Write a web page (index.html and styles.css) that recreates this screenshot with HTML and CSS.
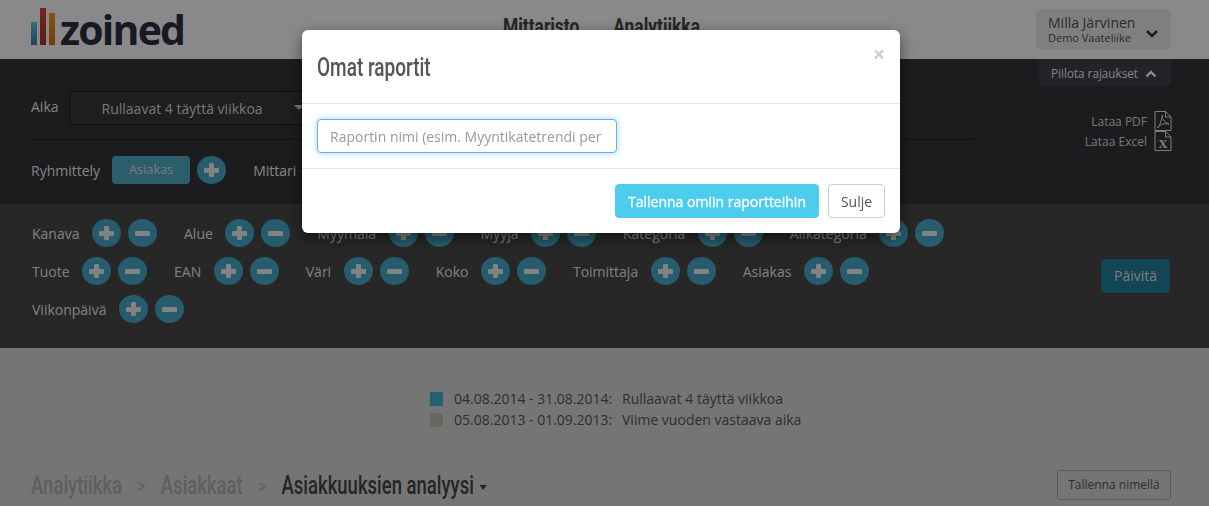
FILE: index.html

```html
<!DOCTYPE html>
<html lang="fi">
<head>
  <meta charset="UTF-8">
  <title>Zoined - Analytiikka</title>
  <link rel="stylesheet" href="styles.css">
</head>
<body>
  <div class="page">
    <header class="topbar">
      <div class="logo">
        <span class="logo-bar bar-blue"></span>
        <span class="logo-bar bar-red"></span>
        <span class="logo-bar bar-orange"></span>
        <span class="logo-text">zoined</span>
      </div>
      <nav class="mainnav">
        <a>Mittaristo</a>
        <a>Analytiikka</a>
      </nav>
      <div class="user">
        <div>
          <div class="user-name">Milla Järvinen</div>
          <div class="user-org">Demo Vaateliike</div>
        </div>
        <svg class="chev" width="14" height="9" viewBox="0 0 14 9"><path d="M2 2l5 5 5-5" fill="none" stroke="#3a3a3a" stroke-width="2.6"/></svg>
      </div>
    </header>

    <section class="head">
      <div class="head-left">
        <div class="time-row">
          <span class="lbl">Aika</span>
          <div class="select">Rullaavat 4 täyttä viikkoa<span class="caret"></span></div>
        </div>
        <div class="group-row">
          <span class="lbl">Ryhmittely</span>
          <span class="chip">Asiakas</span>
          <span class="circle plus"></span>
          <span class="lbl lbl-mittari">Mittari</span>
        </div>
      </div>
      <div class="head-right">
        <div class="hide-tab">Piilota rajaukset
          <svg width="12" height="8" viewBox="0 0 12 8"><path d="M1.5 6.5L6 2l4.5 4.5" fill="none" stroke="#fff" stroke-width="2.4"/></svg>
        </div>
        <div class="downloads">
          <div class="dl">Lataa PDF
            <svg width="18" height="20" viewBox="0 0 18 20"><path class="file" d="M1 .5h10.5l5.5 5.5v13.5H1zM11.5 .5V6H17"/><path class="file" d="M8.500 4c-1 3 1 7 6.500 9-4-1-9 0-11.500 4 2-2 4-7 5-13z"/></svg>
          </div>
          <div class="dl">Lataa Excel
            <svg width="18" height="20" viewBox="0 0 18 20"><path class="file" d="M1 .5h10.500l5.500 5.500v13.500H1zM11.500 .5V6H17"/><text x="9" y="17" class="file-x">X</text></svg>
          </div>
        </div>
      </div>
    </section>

    <section class="filters">
      <div class="filter-rows">
        <div class="filter-row">
          <div class="filter"><span>Kanava</span><i class="circle plus"></i><i class="circle minus"></i></div>
          <div class="filter"><span>Alue</span><i class="circle plus"></i><i class="circle minus"></i></div>
          <div class="filter"><span>Myymälä</span><i class="circle plus"></i><i class="circle minus"></i></div>
          <div class="filter"><span>Myyjä</span><i class="circle plus"></i><i class="circle minus"></i></div>
          <div class="filter"><span>Kategoria</span><i class="circle plus"></i><i class="circle minus"></i></div>
          <div class="filter"><span>Alikategoria</span><i class="circle plus"></i><i class="circle minus"></i></div>
        </div>
        <div class="filter-row">
          <div class="filter"><span>Tuote</span><i class="circle plus"></i><i class="circle minus"></i></div>
          <div class="filter"><span>EAN</span><i class="circle plus"></i><i class="circle minus"></i></div>
          <div class="filter"><span>Väri</span><i class="circle plus"></i><i class="circle minus"></i></div>
          <div class="filter"><span>Koko</span><i class="circle plus"></i><i class="circle minus"></i></div>
          <div class="filter"><span>Toimittaja</span><i class="circle plus"></i><i class="circle minus"></i></div>
          <div class="filter"><span>Asiakas</span><i class="circle plus"></i><i class="circle minus"></i></div>
        </div>
        <div class="filter-row">
          <div class="filter"><span>Viikonpäivä</span><i class="circle plus"></i><i class="circle minus"></i></div>
        </div>
      </div>
      <button class="update">Päivitä</button>
    </section>

    <section class="legend">
      <span class="swatch sw-blue"></span><span>04.08.2014 - 31.08.2014:</span><span>Rullaavat 4 täyttä viikkoa</span>
      <span class="swatch sw-gray"></span><span>05.08.2013 - 01.09.2013:</span><span>Viime vuoden vastaava aika</span>
    </section>

    <section class="crumbrow">
      <div class="crumbs">
        <span>Analytiikka</span><b>&gt;</b><span>Asiakkaat</span><b>&gt;</b><span class="current">Asiakkuuksien analyysi</span><i class="crumb-caret"></i>
      </div>
      <button class="save-as">Tallenna nimellä</button>
    </section>
  </div>

  <div class="backdrop"></div>

  <div class="modal">
    <div class="modal-header">
      <h4>Omat raportit</h4>
      <span class="close">×</span>
    </div>
    <div class="modal-body">
      <input class="report-name" placeholder="Raportin nimi (esim. Myyntikatetrendi per">
    </div>
    <div class="modal-footer">
      <button class="btn-primary">Tallenna omiin raportteihin</button>
      <button class="btn-close">Sulje</button>
    </div>
  </div>
</body>
</html>
```

FILE: styles.css

```css
* { box-sizing: border-box; }
html, body { margin: 0; height: 506px; overflow: hidden; }
body {
  font-family: "Open Sans", sans-serif;
  font-size: 14px;
  color: #555;
  background: #d5d5d5;
}
.page { height: 506px; overflow: hidden; }

/* top bar */
.topbar {
  height: 59px;
  background: #fafafa;
  display: flex;
  align-items: flex-start;
  padding: 0 38px 0 31px;
}
.logo { width: 441px; height: 59px; display: flex; align-items: flex-end; padding-bottom: 14px; }
.logo-bar { width: 6px; margin-right: 3px; }
.bar-blue { height: 23px; background: linear-gradient(#52c6e6, #3f7fa8); }
.bar-red { height: 37px; background: linear-gradient(#d9443a, #a8302e); }
.bar-orange { height: 32px; background: linear-gradient(#ee9a1c, #c9731a); }
.logo-text {
  font-size: 41px;
  font-weight: 700;
  line-height: 41px;
  letter-spacing: -1.8px;
  margin-left: 2px;
  margin-bottom: -5px;
  color: #2b3140;
}
/* headings are a condensed face in the original, none is installed here */
.mainnav {
  display: flex;
  gap: 43px;
  width: 564px;
  padding-top: 14px;
  padding-left: 31px;
  transform: scaleX(.79);
  transform-origin: 31px 0;
}
.mainnav a {
  font-family: Roboto, sans-serif;
  font-size: 22px;
  font-weight: 700;
  color: #444;
}
.user {
  width: 135px;
  height: 40px;
  margin-top: 9px;
  padding: 3px 12px;
  background: #e8e8e8;
  border-radius: 4px;
  display: flex;
  justify-content: space-between;
  align-items: center;
  color: #4e4e4e;
}
.user-name { font-size: 14px; line-height: 17px; }
.user-org { font-size: 11px; line-height: 13px; }
.chev { margin-top: 9px; }

/* dark head band */
.head {
  height: 145px;
  background: #313336;
  display: flex;
  padding-left: 31px;
  padding-right: 38px;
  color: #fafafa;
}
.head-left { width: 944px; padding-top: 32px; }
.head-right { flex: 1; display: flex; flex-direction: column; align-items: flex-end; }
.time-row { display: flex; align-items: center; height: 49px; padding-bottom: 15px; border-bottom: 1px solid #1f2022; }
.lbl { color: #eee; font-size: 14px; }
.time-row .lbl { margin-top: -2px; }
.select {
  position: relative;
  width: 250px;
  height: 34px;
  margin-left: 10px;
  padding-left: 32px;
  line-height: 34px;
  background: #373737;
  border: 1px solid #1a1a1a;
  border-radius: 4px;
  color: #d9d9d9;
}
.caret {
  position: absolute;
  right: 14px;
  top: 13px;
  border: 5px solid transparent;
  border-top-color: #ddd;
}
.group-row { display: flex; align-items: center; margin-top: 15px; height: 30px; }
.chip {
  width: 78px;
  height: 28px;
  margin-left: 12px;
  margin-right: 7px;
  line-height: 26px;
  text-align: center;
  font-size: 12.7px;
  background: #4fa9c2;
  border-radius: 4px;
  color: #e4e4e4;
}
.lbl-mittari { margin-left: 27px; }
.hide-tab {
  width: 132px;
  height: 27px;
  padding-left: 12px;
  font-size: 11.7px;
  line-height: 29px;
  background: #3f4145;
  border-radius: 0 0 5px 5px;
  color: #eee;
}
.hide-tab svg { margin-left: 4px; }
.downloads { margin-top: 25px; }
.dl {
  display: flex;
  justify-content: flex-end;
  align-items: center;
  gap: 7px;
  height: 20px;
  font-size: 12px;
  color: #ddd;
}
.dl svg { margin-right: -1px; }
.file { fill: none; stroke: #e6e6e6; stroke-width: 1; }
.file-x { font-family: "Liberation Serif", serif; font-weight: 700; font-size: 13px; text-anchor: middle; fill: #e6e6e6; }

/* filters */
.filters {
  height: 144px;
  background: #474747;
  display: flex;
  justify-content: space-between;
  padding: 10px 39px 0 32px;
}
.filter-row { display: flex; height: 38px; gap: 27px; align-items: center; }
.filter { display: flex; align-items: center; color: #e8e8e8; }
.filter span { margin-right: 12.5px; }
.filter .circle + .circle { margin-left: 7px; }
.circle {
  position: relative;
  display: inline-block;
  flex: none;
  width: 29px;
  height: 28px;
  border-radius: 50%;
  background: #45a8c8;
}
.plus::before, .plus::after, .minus::before {
  content: "";
  position: absolute;
  background: #ededed;
  border-radius: 1px;
}
.plus::before, .minus::before { left: 7px; right: 7px; top: 11.5px; height: 5px; }
.plus::after { top: 7px; bottom: 7px; left: 12px; width: 5px; }
.update {
  width: 69px;
  height: 34px;
  margin-top: 45px;
  padding-bottom: 3px;
  border: 0;
  border-radius: 4px;
  background: #217f9b;
  color: #e4e4e4;
  font: 14px "Open Sans", sans-serif;
}

/* legend */
.legend {
  display: grid;
  grid-template-columns: 24px 168px auto;
  grid-auto-rows: 21px;
  align-items: center;
  margin: 40px 0 0 430px;
  width: 600px;
}
.swatch { width: 13px; height: 14px; }
.sw-blue { background: #45aed0; }
.sw-gray { background: #bebeaf; }

/* breadcrumbs */
.crumbrow {
  display: flex;
  justify-content: space-between;
  align-items: center;
  margin-top: 39px;
  padding: 0 38px 0 31px;
}
.crumbs {
  display: flex;
  align-items: center;
  margin-top: 2px;
  font-family: Roboto, sans-serif;
  font-size: 25px;
  font-weight: 500;
  color: #adadad;
  transform: scaleX(.74);
  transform-origin: 0 0;
}
.crumbs b { font-size: 20px; font-weight: 400; margin: 0 21px; }
.crumbs .current { color: #454545; }
.crumb-caret {
  margin: 4px 0 0 7px;
  border: 5px solid transparent;
  border-top-color: #454545;
  border-bottom: 0;
}
.save-as {
  width: 114px;
  height: 30px;
  background: #d5d5d5;
  border: 1px solid #a3a3a3;
  border-radius: 3px;
  color: #555;
  font: 12px "Open Sans", sans-serif;
}

/* dialog */
.backdrop { position: fixed; left: 0; top: 0; right: 0; bottom: 0; background: rgba(0, 0, 0, .45); }
.modal {
  position: fixed;
  left: 302px;
  top: 30px;
  width: 598px;
  height: 203px;
  background: #fff;
  border-radius: 6px;
  box-shadow: 0 5px 15px rgba(0, 0, 0, .5);
}
.modal-header {
  height: 74px;
  padding: 0 15px;
  display: flex;
  justify-content: space-between;
  border-bottom: 1px solid #e5e5e5;
}
.modal-header h4 {
  margin: 22px 0 0;
  font-family: Roboto, sans-serif;
  font-size: 25px;
  font-weight: 500;
  line-height: 32px;
  color: #555;
  transform: scaleX(.76);
  transform-origin: 0 0;
}
.close { font-size: 21px; font-weight: 700; line-height: 21px; margin: 14px 0 0; color: #ccc; }
.modal-body { height: 65px; padding: 15px; border-bottom: 1px solid #e5e5e5; }
.report-name {
  display: block;
  width: 300px;
  height: 34px;
  padding: 0 12px;
  border: 1px solid #66afe9;
  border-radius: 4px;
  outline: 0;
  box-shadow: 0 0 6px rgba(102, 175, 233, .6);
  font: 14px "Open Sans", sans-serif;
}
.report-name::placeholder { color: #999; opacity: 1; }
.modal-footer { display: flex; justify-content: flex-end; gap: 9px; padding: 15px; }
.modal-footer button { height: 34px; border-radius: 4px; font: 14px "Open Sans", sans-serif; }
.btn-primary { width: 204px; border: 1px solid #4ccdf0; background: #4ccdf0; color: #fff; -webkit-text-stroke: .3px #fff; }
.btn-close { width: 57px; border: 1px solid #ccc; background: #fff; color: #555; }
```
